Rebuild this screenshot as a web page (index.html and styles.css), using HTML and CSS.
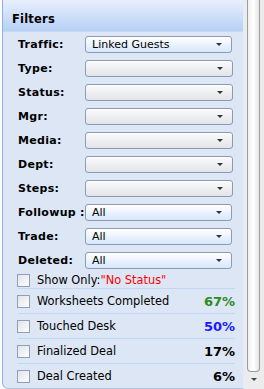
FILE: index.html
```html
<!DOCTYPE html>
<html lang="en">
<head>
    <meta charset="UTF-8">
    <title>Filters</title>
    <link rel="stylesheet" href="styles.css">
</head>
<body>
    <div class="frame">
        <div class="panel">
            <div class="header">Filters</div>
            <div class="body">
                <div class="row"><label>Traffic:</label><div class="select active"><span>Linked Guests</span><i class="arrow"></i></div></div>
                <div class="row"><label>Type:</label><div class="select"><span></span><i class="arrow"></i></div></div>
                <div class="row"><label>Status:</label><div class="select"><span></span><i class="arrow"></i></div></div>
                <div class="row"><label>Mgr:</label><div class="select"><span></span><i class="arrow"></i></div></div>
                <div class="row"><label>Media:</label><div class="select"><span></span><i class="arrow"></i></div></div>
                <div class="row"><label>Dept:</label><div class="select"><span></span><i class="arrow"></i></div></div>
                <div class="row"><label>Steps:</label><div class="select"><span></span><i class="arrow"></i></div></div>
                <div class="row"><label>Followup :</label><div class="select active"><span>All</span><i class="arrow"></i></div></div>
                <div class="row"><label>Trade:</label><div class="select active"><span>All</span><i class="arrow"></i></div></div>
                <div class="row"><label>Deleted:</label><div class="select active"><span>All</span><i class="arrow"></i></div></div>

                <div class="check first"><span class="box"></span><span class="text">Show Only:<em>"No Status"</em></span></div>
                <div class="check"><span class="box"></span><span class="text">Worksheets Completed</span><b class="pct green">67%</b></div>
                <div class="check"><span class="box"></span><span class="text">Touched Desk</span><b class="pct blue">50%</b></div>
                <div class="check"><span class="box"></span><span class="text">Finalized Deal</span><b class="pct">17%</b></div>
                <div class="check last"><span class="box"></span><span class="text">Deal Created</span><b class="pct">6%</b></div>
            </div>
        </div>
        <div class="scrollbar">
            <div class="thumb"></div>
            <div class="down"><i></i></div>
        </div>
    </div>
</body>
</html>
```

FILE: styles.css
```css
body {
    margin: 0;
    background-color: #fff;
    font-family: "DejaVu Sans", Verdana, sans-serif;
    font-size: 11px;
    color: #000;
}

.frame {
    display: flex;
    height: 389px;
}

.panel {
    width: 240px;
    margin-left: 2px;
    border-left: 1px solid #8eb0e0;
    border-right: 2px solid #e6ecf5;
    border-bottom: 1px solid #b4c6de;
    border-bottom-left-radius: 6px;
    background-color: #dce6f4;
    display: flex;
    flex-direction: column;
}

.header {
    flex-shrink: 0;
    height: 32px;
    box-sizing: border-box;
    padding: 12px 0 0 9px;
    font-weight: bold;
    font-size: 11.5px;
    letter-spacing: 0.2px;
    background: linear-gradient(#e8effb, #b6d0f6);
    border-bottom: 1px solid #c8d8ee;
}

.body {
    flex: 1;
    padding: 0 8px 0 15px;
}

.row {
    display: flex;
    align-items: center;
    height: 24px;
}

.row label {
    width: 67px;
    font-weight: bold;
    letter-spacing: 0.3px;
    white-space: nowrap;
}

.select {
    position: relative;
    width: 139px;
    height: 15px;
    border: 1px solid #8a9bb3;
    border-radius: 3px;
    background: linear-gradient(#fbfbfb, #e1e3e7);
    padding-left: 7px;
    line-height: 15px;
    box-shadow: inset 0 1px 0 #fff;
}

.select.active {
    background: linear-gradient(#ffffff, #d6e7fb);
    padding-left: 6px;
}

.arrow {
    position: absolute;
    right: 9px;
    top: 6px;
    border-left: 3px solid transparent;
    border-right: 3px solid transparent;
    border-top: 3px solid #333;
}

.check {
    display: flex;
    align-items: center;
    height: 24px;
    border-bottom: 1px solid #c2d7f3;
    font-size: 11.4px;
}

.check.first {
    height: 16px;
}

.check.last {
    border-bottom: none;
}

.box {
    width: 11px;
    height: 11px;
    border: 1px solid #8f9fb6;
    background: linear-gradient(135deg, #e1e4e9, #fdfdfd);
    margin-left: -1px;
    margin-right: 7px;
}

.text em {
    font-style: normal;
    color: #f00;
}

.pct {
    margin-left: auto;
    font-size: 13px;
}

.green {
    color: #2d8a1e;
}

.blue {
    color: #1a1aff;
}

.scrollbar {
    width: 19px;
    background: #ececec;
    display: flex;
    flex-direction: column;
}

.thumb {
    height: 371px;
    width: 11px;
    margin-left: 2px;
    border: 1px solid #9c9c9c;
    border-top: none;
    border-radius: 0 0 4px 4px;
    background: linear-gradient(90deg, #f0f0f0, #ffffff 50%, #e6e6e6);
}

.down {
    height: 17px;
    position: relative;
}

.down i {
    position: absolute;
    left: 6px;
    top: 6px;
    border-left: 3px solid transparent;
    border-right: 3px solid transparent;
    border-top: 3px solid #444;
}
```
